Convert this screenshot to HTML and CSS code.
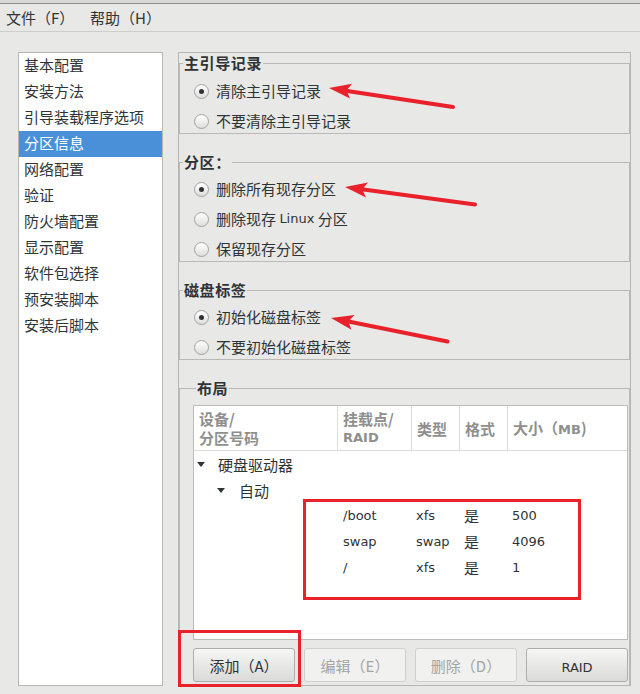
FILE: index.html
```html
<!DOCTYPE html>
<html lang="zh-CN">
<head>
<meta charset="utf-8">
<title>Kickstart 配置</title>
<link rel="stylesheet" href="styles.css">
</head>
<body>
<div class="topbar"></div>
<div class="menubar">
  <span class="menu">文件（F）</span>
  <span class="menu">帮助（H）</span>
</div>
<div class="main">
  <ul class="sidebar">
    <li>基本配置</li>
    <li>安装方法</li>
    <li>引导装载程序选项</li>
    <li class="selected">分区信息</li>
    <li>网络配置</li>
    <li>验证</li>
    <li>防火墙配置</li>
    <li>显示配置</li>
    <li>软件包选择</li>
    <li>预安装脚本</li>
    <li>安装后脚本</li>
  </ul>
  <div class="panel">
    <fieldset class="group g1">
      <legend>主引导记录</legend>
      <div class="options">
        <div class="opt"><span class="radio on"></span>清除主引导记录</div>
        <div class="opt"><span class="radio"></span>不要清除主引导记录</div>
      </div>
    </fieldset>
    <fieldset class="group">
      <legend>分区：</legend>
      <div class="options">
        <div class="opt"><span class="radio on"></span>删除所有现存分区</div>
        <div class="opt"><span class="radio"></span>删除现存&nbsp; <span class="lat">Linux</span>&nbsp;分区</div>
        <div class="opt"><span class="radio"></span>保留现存分区</div>
      </div>
    </fieldset>
    <fieldset class="group">
      <legend>磁盘标签</legend>
      <div class="options">
        <div class="opt"><span class="radio on"></span>初始化磁盘标签</div>
        <div class="opt"><span class="radio"></span>不要初始化磁盘标签</div>
      </div>
    </fieldset>
    <fieldset class="group layout">
      <legend>布局</legend>
      <div class="table">
        <div class="thead">
          <div class="th"><span>设备/</span><span>分区号码</span></div>
          <div class="th"><span>挂载点/</span><span class="lat-h">RAID</span></div>
          <div class="th"><span>类型</span></div>
          <div class="th"><span>格式</span></div>
          <div class="th"><span>大小（<span class="lat-h">MB</span>)</span></div>
        </div>
        <div class="tbody">
          <div class="tree lvl1"><span class="tri"></span>硬盘驱动器</div>
          <div class="tree lvl2"><span class="tri"></span>自动</div>
          <div class="row"><span></span><span class="lat">/boot</span><span class="lat">xfs</span><span>是</span><span class="lat">500</span></div>
          <div class="row"><span></span><span class="lat">swap</span><span class="lat">swap</span><span>是</span><span class="lat">4096</span></div>
          <div class="row"><span></span><span class="lat">/</span><span class="lat">xfs</span><span>是</span><span class="lat">1</span></div>
        </div>
      </div>
      <div class="buttons">
        <button class="btn">添加（A）</button>
        <button class="btn" disabled>编辑（E）</button>
        <button class="btn" disabled>删除（D）</button>
        <button class="btn"><span class="lat">RAID</span></button>
      </div>
    </fieldset>
  </div>
</div>

<div class="mark mark-table"></div>
<div class="mark mark-add"></div>
<svg class="arrows" width="640" height="694" viewBox="0 0 640 694" aria-hidden="true">
  <g stroke="#e8212b" stroke-width="4" stroke-linecap="round" fill="none">
    <line x1="453" y1="107" x2="344" y2="90.5"/>
    <line x1="475" y1="204.5" x2="360" y2="189"/>
    <line x1="447.5" y1="341.5" x2="346" y2="321"/>
  </g>
  <g fill="#e8212b">
    <polygon points="329,88 352,83.8 346.5,90.6 350,98.6"/>
    <polygon points="345,187 368,182.6 362.2,189.3 366,197.4"/>
    <polygon points="331,318 354.5,315 348.2,321.6 351.5,329.8"/>
  </g>
</svg>
</body>
</html>
```
FILE: styles.css
```css
html, body {
  margin: 0;
  padding: 0;
}

body {
  width: 640px;
  height: 694px;
  position: relative;
  overflow: hidden;
  background: #e8e8e7;
  font-family: "Noto Sans CJK SC", "DejaVu Sans", sans-serif;
  font-size: 15px;
  color: #2e3436;
}

.lat {
  font-family: "DejaVu Sans", "Noto Sans CJK SC", sans-serif;
  font-size: 13px;
}

.topbar {
  height: 3px;
  background: #d8d8d7;
  border-bottom: 1px solid #8f8f8e;
}

.menubar {
  height: 27px;
  border-bottom: 1px solid #cdcdcc;
  display: flex;
  align-items: center;
  padding-left: 6px;
  line-height: 26px;
}

.menu {
  width: 84px;
}

.main {
  display: flex;
  padding: 20px 0 0 18px;
}

.sidebar {
  list-style: none;
  margin: 0;
  padding: 0;
  width: 145px;
  height: 634px;
  box-sizing: border-box;
  background: #ffffff;
  border: 1px solid #b6b6b4;
}

.sidebar li {
  height: 26px;
  line-height: 23px;
  padding-left: 5px;
  white-space: nowrap;
}

.sidebar li.selected {
  background: #4a90d9;
  color: #ffffff;
}

.panel {
  margin-left: 15px;
  width: 453px;
  height: 634px;
  box-sizing: border-box;
  border: 1px solid #b6b6b4;
  overflow: hidden;
}

.group {
  margin: 19px 0 0 0;
  padding: 0;
  border: 1px solid #b9b9b7;
  min-width: 0;
}

.group.g1 {
  margin-top: 1px;
}

.group legend {
  margin-left: 3px;
  padding: 0 1px;
  font-weight: bold;
  line-height: 18px;
  letter-spacing: 0.6px;
  color: #2e3436;
}

.options {
  display: flex;
  flex-direction: column;
  gap: 6px;
  padding: 7px 0 0 14px;
}

.group:not(.g1) .options {
  padding-top: 6px;
}

.opt {
  display: flex;
  align-items: center;
  height: 24px;
  line-height: 24px;
  white-space: nowrap;
}

.radio {
  flex: none;
  width: 15px;
  height: 15px;
  box-sizing: border-box;
  margin-right: 7px;
  border: 1px solid #a2a2a0;
  border-radius: 50%;
  background: linear-gradient(#ffffff, #dededc);
  display: flex;
  align-items: center;
  justify-content: center;
}

.radio.on::after {
  content: "";
  width: 5px;
  height: 5px;
  border-radius: 50%;
  background: #2e3436;
}

.layout {
  padding: 8px 1px 0 13px;
  height: 306px;
}

.table {
  height: 235px;
  box-sizing: border-box;
  background: #ffffff;
  border: 1px solid #bcbcba;
  display: flex;
  flex-direction: column;
}

.thead,
.row {
  display: grid;
  grid-template-columns: 144px 74px 48px 48px 1fr;
}

.thead {
  height: 44px;
  border-bottom: 1px solid #dcdcdb;
}

.th {
  box-sizing: border-box;
  border-right: 1px solid #dededd;
  padding-left: 5px;
  display: flex;
  flex-direction: column;
  justify-content: center;
  line-height: 19px;
  font-weight: bold;
  color: #8f8f8e;
  white-space: nowrap;
}

.th:last-child {
  border-right: none;
}

.lat-h {
  font-family: "DejaVu Sans", sans-serif;
  font-size: 13px;
}

.tree {
  height: 26px;
  display: flex;
  align-items: center;
  line-height: 25px;
}

.tri {
  width: 0;
  height: 0;
  border-left: 4px solid transparent;
  border-right: 4px solid transparent;
  border-top: 5px solid #2e3436;
}

.lvl1 {
  padding-left: 3px;
}

.lvl1 .tri {
  margin-right: 13px;
}

.lvl2 {
  padding-left: 23px;
}

.lvl2 .tri {
  margin-right: 14px;
}

.row {
  height: 26px;
  line-height: 26px;
  align-items: center;
}

.row > span {
  padding-left: 5px;
  white-space: nowrap;
}

.row > span:nth-child(n+3) {
  padding-left: 4px;
}

.buttons {
  display: flex;
  gap: 9px;
  margin-top: 8px;
}

.btn {
  flex: 1;
  height: 34px;
  box-sizing: border-box;
  border: 1px solid #adadab;
  border-radius: 3px;
  background: linear-gradient(#f6f6f5, #dadad8);
  font-family: "Noto Sans CJK SC", "DejaVu Sans", sans-serif;
  font-size: 15px;
  color: #2e3436;
  padding: 0;
}

.btn:disabled {
  background: #f1f1f0;
  border-color: #cfcfcd;
  color: #a4a4a3;
}

.mark {
  position: absolute;
  box-sizing: border-box;
  border: 3px solid #e8212b;
}

.mark-table {
  left: 303px;
  top: 499px;
  width: 278px;
  height: 101px;
}

.mark-add {
  left: 178px;
  top: 630px;
  width: 123px;
  height: 57px;
}

.arrows {
  position: absolute;
  left: 0;
  top: 0;
  pointer-events: none;
}
```
